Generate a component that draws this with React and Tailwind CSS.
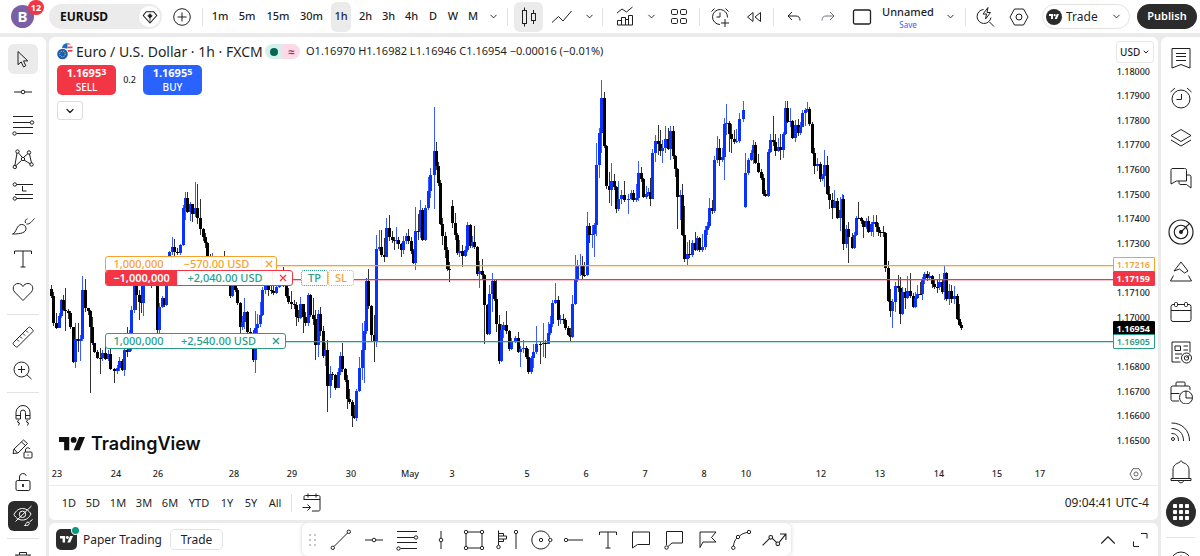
import React from 'react';
import { ChevronDown, ChevronUp } from 'lucide-react';

// Each candle: x, close, high, low. It opens at the previous close; a leading "g" starts a new session at the given open.
const CANDLE_DATA = `
g289 51,296,285,298 53,323,292,326 56,328,313,329 59,316,313,328 61,300,299,318 63,310,295,311 65,311,288,331 68,313,309,319 70,327,311,329
73,362,327,363 75,339,323,368 78,341,323,352 80,339,335,361 82,290,276,341 85,308,279,312 88,311,308,315 90,327,310,393 92,343,317,345
94,352,343,353 97,358,350,359 100,358,348,374 102,353,350,361 105,359,345,360 108,354,350,361 110,369,345,370 114,371,368,383 117,368,365,374
119,361,357,371 122,370,359,371 124,350,348,376 127,352,327,357 129,345,330,352 131,310,306,351 134,285,280,313 136,295,282,310 139,302,290,320
141,303,286,313 143,286,276,316 146,270,264,286 149,276,268,284 151,280,265,288 154,268,262,282 157,330,268,338 159,307,303,338 162,298,296,308
164,305,298,307 166,262,258,306 169,252,251,265 172,247,237,255 174,252,239,256 177,253,248,255 180,245,244,255 183,208,205,246 185,198,192,220
187,212,192,213 190,204,202,221 192,214,204,222 195,208,182,217 197,218,184,224 200,229,199,235 203,237,228,241 205,243,233,248 207,256,242,258
210,265,254,268 212,259,253,268 215,272,258,276 218,268,262,274 221,275,266,279 224,280,251,284 227,276,268,284 230,296,274,298 232,285,283,297
235,290,283,292 237,303,288,305 240,327,302,337 242,322,316,330 244,312,298,329 247,332,311,335 250,344,328,348 253,360,330,362 255,328,311,373
257,324,314,334 260,315,302,327 262,290,287,316 265,285,281,294 268,290,282,296 271,291,284,294 273,293,286,295 276,287,282,294 279,280,274,288
281,276,270,282 283,283,267,287 286,296,278,298 288,302,288,304 291,304,291,309 294,305,300,309 296,317,302,326 298,318,310,322 300,304,297,319
303,317,304,333 305,323,312,326 308,295,293,326 310,315,294,317 313,319,298,325 315,345,310,360 318,314,310,357 320,331,307,336 323,356,326,358
325,350,343,366 327,386,340,412 330,374,366,398 332,375,372,380 335,388,374,390 338,372,368,388 340,356,352,375 342,369,343,372 345,380,368,382
347,399,375,409 349,402,389,404 352,416,400,427 354,418,405,419 356,391,389,421 359,368,357,392 362,350,323,380 364,331,321,383 366,281,278,334
368,306,269,309 371,335,305,341 374,341,315,362 376,249,235,347 379,247,230,251 381,255,230,257 384,257,238,262 386,228,218,257 389,237,215,241
392,240,231,243 394,241,237,250 396,240,227,244 398,244,237,249 401,250,243,257 403,241,236,254 406,236,233,244 408,241,229,244 411,251,237,254
413,263,249,264 415,231,207,270 418,232,214,240 420,210,200,238 422,240,208,241 425,208,205,241 428,191,177,210 430,175,168,198 434,151,107,209
436,166,142,170 438,183,162,186 440,224,180,225 442,236,218,245 445,250,232,258 447,269,247,271 449,270,262,282
g206 452,223,200,228 455,235,213,240 457,253,233,255 459,251,240,257 462,256,245,267 465,250,246,257 467,225,222,252 470,246,224,248 472,242,236,248
474,247,226,249 477,274,246,276 479,271,261,288 482,275,259,280 484,305,274,344 487,334,304,335 489,294,285,335 492,281,273,312 494,299,279,301
496,324,280,332 499,361,315,364 501,330,324,362 503,325,322,338 506,331,311,334 509,349,330,351 511,342,338,350 515,338,336,343 518,352,332,353
520,349,346,367 523,348,340,353 526,357,346,359 528,372,349,374 531,358,356,374 533,352,344,368 536,344,326,354 540,344,341,364 543,343,323,357
545,344,340,358 548,333,322,344 550,324,316,335 552,303,300,327 555,300,283,304 558,320,296,326 560,319,315,324 563,320,314,324 565,328,318,330
568,335,326,336 570,337,328,342 572,304,295,338 575,280,255,305 577,266,260,282 580,265,254,276 582,275,256,279 584,275,262,277 587,226,212,276
589,235,223,243 592,234,225,248 594,225,223,257 596,165,143,236 599,133,128,178 601,98,80,153 604,146,92,148 606,186,145,189 609,190,172,203
611,181,163,206 614,187,174,190 616,209,186,213 618,199,181,211 621,195,190,204 624,200,181,202 628,199,194,214 631,193,190,200 633,200,190,202
636,198,184,202 638,173,161,201 641,179,167,182 643,197,178,198 646,194,186,199 648,192,188,196 650,199,178,206 652,153,149,199 655,141,135,162
658,144,125,155 660,151,130,156 662,148,140,163 665,139,126,153 668,149,128,150 670,131,126,160 673,156,126,159 675,169,155,177 677,197,168,229
680,195,190,220 682,235,184,236 684,259,206,262 687,254,242,265 689,255,240,258 692,243,240,257 695,250,232,251 697,238,236,251 699,250,237,252
702,247,234,252 705,230,226,250 707,226,222,235 709,208,198,228 712,211,200,214 714,160,156,213 717,148,136,163 719,160,139,166 722,157,148,162
724,124,118,180 726,123,104,135 729,134,121,152 731,139,124,153 734,142,130,144 736,141,129,143 739,119,113,143 743,110,101,122
g207 745,173,153,208 748,160,158,175 751,153,150,161 753,145,140,164 755,163,142,164 758,172,154,173 761,178,169,180 763,194,174,196 765,196,190,197
768,152,149,197 770,140,134,153 773,142,116,146 775,151,134,156 778,147,138,152 780,150,134,160 783,134,132,158 785,108,101,135 787,122,101,123
790,121,108,127 792,138,120,139 795,125,120,142 798,133,119,136 800,127,122,135 802,113,110,127 805,110,108,126 807,109,102,112 809,124,107,126
812,153,122,154 814,166,148,174 817,164,158,171 820,179,162,182 822,176,174,181 824,165,150,187 827,194,156,195 829,200,186,209 832,208,193,219
834,201,190,208 837,218,198,219 840,210,197,231 842,199,194,230 843,244,195,250 846,229,225,248 848,237,222,263 852,248,233,249 854,235,232,249
856,218,216,236 858,218,202,219 861,221,217,224 863,227,220,238 866,221,218,229 868,232,216,233 871,224,222,236 873,222,215,237 876,227,215,232
878,232,223,236 880,232,230,237 883,233,226,237 885,268,232,272 888,301,261,302 890,311,289,317 892,302,299,328 895,286,282,312 898,288,275,292
900,314,277,324 902,292,287,315 905,298,288,309 907,291,276,299 910,296,273,298 913,307,293,308 915,298,292,308 917,294,285,299 920,294,282,295
922,279,277,300 924,274,272,284 927,278,271,281 929,276,272,280 932,284,275,288 934,287,280,289 937,287,280,293 939,282,274,290 942,292,279,294
944,273,265,300 946,299,272,301 949,291,284,305 951,299,285,303 954,296,286,304 957,319,294,320 959,325,304,326 961,328,322,330`;

const candles = [];
let previousClose = 0;
CANDLE_DATA.trim().split(/\s+/).forEach((item) => {
  if (item.startsWith('g')) {
    previousClose = Number(item.slice(1));
    return;
  }
  const [x, close, high, low] = item.split(',').map(Number);
  candles.push({ x, open: previousClose, close, high, low, up: close < previousClose });
  previousClose = close;
});

const PLOT = { left: 49, top: 37, width: 1064, height: 426 };

const priceLabels = [
  '1.18000', '1.17900', '1.17800', '1.17700', '1.17600', '1.17500', '1.17400', '1.17300',
  '', '1.17100', '1.17000', '', '1.16800', '1.16700', '1.16600', '1.16500',
];

const timeLabels = [
  ['23', 57], ['24', 116], ['26', 158], ['28', 234], ['29', 292], ['30', 351], ['May', 410], ['3', 452], ['5', 527],
  ['6', 586], ['7', 645], ['8', 704], ['10', 746], ['12', 821], ['13', 880], ['14', 939], ['15', 997], ['17', 1040],
];

const Icon = ({ size = 24, children, className = '' }) => (
  <svg
    width={size}
    height={size}
    viewBox="0 0 24 24"
    fill="none"
    stroke="currentColor"
    strokeWidth="1"
    className={`shrink-0 ${className}`}
    aria-hidden="true"
  >
    {children}
  </svg>
);

const Logo = ({ className }) => (
  <svg viewBox="0 4 35.5 18" fill="currentColor" className={className} aria-hidden="true">
    <path d="M14 22H7V11H0V4h14v18zM28 22h-8l7.5-18h8L28 22z" />
    <circle cx="20" cy="8" r="4" />
  </svg>
);

/* Left toolbar icons */
const CursorIcon = () => (
  <Icon><path d="M7 4.5v13.2l3.2-2.8 2.3 5 2.3-1.1-2.3-4.9h4.3z" /></Icon>
);
const HorizontalLineIcon = () => (
  <Icon><path d="M3 12h7M14 12h7" /><circle cx="12" cy="12" r="1.8" /></Icon>
);
const FibIcon = () => (
  <Icon>
    <path d="M2 3.5h20M2 9.5h17M2 14.5h20M5.500 20.500H22" />
    <circle cx="21" cy="9.5" r="1.7" /><circle cx="3.5" cy="20.5" r="1.7" />
  </Icon>
);
const PatternIcon = () => (
  <Icon>
    <path d="M3.800 19 6 6M7.500 6l3.500 4M13 10l4-3.500M18.500 7l2 9M4.500 19l6-5.500M13 13l6.500 4" />
    <circle cx="6.5" cy="4.5" r="1.7" /><circle cx="3.8" cy="20" r="1.7" /><circle cx="12" cy="12" r="1.7" />
    <circle cx="18" cy="5.5" r="1.7" /><circle cx="20.5" cy="17.5" r="1.7" />
  </Icon>
);
const ForecastIcon = () => (
  <Icon>
    <path d="M5.500 4.500H22M5.500 18.500H22M4 14.500h18M11.500 6v5h4" />
    <circle cx="3.8" cy="4.5" r="1.7" /><circle cx="3.8" cy="18.5" r="1.7" />
  </Icon>
);
const BrushIcon = () => (
  <Icon>
    <path d="M1.500 20c4-1 4-9.500 9-9.500 2.500 0 4.500 1.500 4.500 4 0 4-4.500 5.500-13.500 5.500zM14.500 9c-1-2 .5-4 2-4.200M15.500 10c3.500.5 5.500-3 8-5.500" />
  </Icon>
);
const TextIcon = () => (
  <Icon><path d="M3.500 7V4h17v3M12 4v16M9.500 20h5" /></Icon>
);
const HeartIcon = () => (
  <Icon><path d="M12 20.500 3.600 12C.8 8.800 2.500 3.500 7 3.500c2.200 0 4 1.200 5 3 1-1.800 2.800-3 5-3 4.500 0 6.200 5.300 3.400 8.500z" /></Icon>
);
const RulerIcon = () => (
  <Icon>
    <path d="m2.500 17.500 15-15c.6-.6 1.400-.6 2 0l2.200 2.200c.6.6.6 1.400 0 2l-15 15c-.6.6-1.400.6-2 0l-2.200-2.200c-.6-.6-.6-1.400 0-2zM6 14.500l2 2M9 11.500l2 2M12 8.500l2 2M15 5.500l2 2" />
  </Icon>
);
const ZoomIcon = () => (
  <Icon><circle cx="10.5" cy="11.5" r="7.5" /><path d="m16 17 4.500 4M10.500 8v7M7 11.500h7" /></Icon>
);
const MagnetIcon = () => (
  <Icon>
    <path d="M5 16V9.500a7 7 0 0 1 14 0V16h-4.500V9.500a2.500 2.500 0 0 0-5 0V16zM5 12.500h4.500M14.500 12.500H19M7.500 17l-1 2 2 1-1 2.500M16.500 17l-1 2 2 1-1 2.500" />
  </Icon>
);
const PencilLockIcon = () => (
  <Icon>
    <path d="m2 16.500 1-4.500 9.500-9 4 3.500-9.500 9.500zM3 12l3.500 4M10.500 5l4 3.500" />
    <rect x="13" y="15" width="8" height="6" rx="1" /><path d="M14.500 15v-2a2.300 2.300 0 0 1 4.400-.9M17 17.500v1.200" />
  </Icon>
);
const LockIcon = () => (
  <Icon>
    <rect x="5" y="10.5" width="14" height="10" rx="1.5" />
    <path d="M8.500 10.500V7a3.500 3.500 0 0 1 6.800-1.200" /><path d="M12 14v3" strokeWidth="1.8" />
  </Icon>
);
const HideIcon = () => (
  <Icon>
    <path d="M3 10.500C5 6.500 8 4.500 11.500 4.500S18 6.500 20 10c-2 4-5 6-8.500 6S5 14.500 3 10.500zM20.500 2 4.500 17.500" />
    <circle cx="11.5" cy="10.3" r="3.2" />
    <path d="M13.500 21.500c1.500-.5 1.500-3.500 3.500-3.500 2.500 1 1.500 4-3.500 3.500zM18.500 18l3-2.500" />
  </Icon>
);
const TrashIcon = () => (
  <Icon><path d="M4 6h16M8.500 6V3.500h7V6M6 6l1 14.500h10L18 6" /></Icon>
);

/* Right toolbar icons */
const WatchlistIcon = () => (
  <Icon><path d="M3 2.500h18v19.500l-9-3.500L3 22zM7 7.500h10M7 10.500h10M7 14.500h10" /></Icon>
);
const AlarmIcon = () => (
  <Icon><circle cx="12" cy="13" r="9" /><path d="M12.500 8v5.500h-5M1.500 6 6 2M22.500 6 18 2" /></Icon>
);
const LayersIcon = () => (
  <Icon><path d="m12 3.500 10 6-10 6-10-6zM2 14l10 6 10-6" /></Icon>
);
const ChatIcon = () => (
  <Icon><path d="M4 2.500h11.500c1.500 0 2 .5 2 2V15H7.500L2 18V4.500c0-1.500.5-2 2-2zM17.500 9H20c1.500 0 2 .5 2 2v11l-4.500-3.500H12c-1.500 0-2-.5-2-2V15" /></Icon>
);
const RadarIcon = () => (
  <Icon size={28}>
    <circle cx="12" cy="12" r="10.3" /><circle cx="12" cy="12" r="5.8" />
    <circle cx="12" cy="12" r="1.2" fill="currentColor" /><path d="m12 12 7-7" />
  </Icon>
);
const PyramidIcon = () => (
  <Icon><path d="m5 11 7-9 7 9-3.500 2-5-4zM4.500 15.500 1.500 21h21l-3-5.500" /></Icon>
);
const CalendarIcon = () => (
  <Icon>
    <rect x="2" y="4.5" width="20" height="17" rx="2" /><path d="M2 10.500h20" />
    <rect x="5.5" y="2.5" width="3" height="4" rx="1" fill="white" /><rect x="15.5" y="2.5" width="3" height="4" rx="1" fill="white" />
  </Icon>
);
const NewsIcon = () => (
  <Icon>
    <path d="M11.500 22H3V2h18v10.500M6 6h5.500v4.500H6zM14.500 6H19M14.500 10H19M6 14h7M6 18h4" />
    <circle cx="17.5" cy="18" r="5" /><circle cx="17.5" cy="18" r="2.2" /><path d="m17.500 18 3-3" />
  </Icon>
);
const PortfolioIcon = () => (
  <Icon>
    <path d="M7 6V3c0-.6.4-1 1-1h7c.6 0 1 .4 1 1v3M10 21H4c-1.300 0-2-.7-2-2V8c0-1.300.7-2 2-2h15c1.300 0 2 .7 2 2v2M2 13.500h8.500" />
    <circle cx="17" cy="17.5" r="6.5" /><path d="M17 11v7h6.500" />
  </Icon>
);
const FeedIcon = () => (
  <Icon>
    <circle cx="4" cy="19" r="1.5" />
    <path d="M2.500 13.500c4.500 0 7 2.500 7 7.500M2.500 8.500c7 0 12 4.500 12 12.500M2.500 3C13 3 20.500 10 20.500 21" />
  </Icon>
);
const BellIcon = () => (
  <Icon><path d="M4 18.500V10c0-4 2.500-6.500 6.500-7.500 0-2 3-2 3 0C17.500 3.500 20 6 20 10v8.500M2 18.500h20v2H2zM9.500 20.500c0 3 5 3 5 0" /></Icon>
);
const AppsIcon = () => (
  <svg width="30" height="30" viewBox="0 0 30 30" aria-hidden="true">
    <circle cx="15" cy="15" r="15" fill="#2b2b2b" />
    {[7, 13, 19].map((y) =>
      [7, 13, 19].map((x) => <rect key={`${x}-${y}`} x={x} y={y} width="4" height="4" rx="0.7" fill="white" />)
    )}
  </svg>
);

/* Header icons */
const CandlesIcon = () => (
  <Icon><rect x="5.5" y="5.5" width="4" height="13" /><path d="M7.500 2.500v3M7.500 18.500v3" /><rect x="14.5" y="8.5" width="4" height="7" /><path d="M16.500 5v3M16.500 16v3" /></Icon>
);
const LineChartIcon = () => (
  <Icon><path d="m2 17.500 6.500-6 4.500 4.500 8.500-10" /></Icon>
);
const IndicatorsIcon = () => (
  <Icon>
    <path d="m4 8 5-4 4.500 3L19.500 2" />
    <path d="M4.500 15.500h4V20h-4zM8.500 12.500h4V20h-4zM12.500 14.500h3V20h-3zM15.500 10.500h4V20h-4z" />
  </Icon>
);
const GridIcon = () => (
  <Icon>
    <rect x="4.5" y="4.5" width="6" height="5" rx="1.2" /><rect x="13.500" y="4.5" width="6" height="5" rx="1.2" />
    <rect x="4.5" y="13.5" width="6" height="5" rx="1.2" /><rect x="13.500" y="13.5" width="6" height="5" rx="1.2" />
  </Icon>
);
const AddAlertIcon = () => (
  <Icon><path d="M12 19.500a7.500 7.500 0 1 1 7.500-7M12 7.500V12H8.500M3.500 6.500l3-3M20.500 6.500l-3-3M17 14v8M13 18h8" /></Icon>
);
const ReplayIcon = () => (
  <Icon><path d="M11 7.500v9l-5.500-4.500zM18.500 7.500v9L13 12z" /></Icon>
);
const UndoIcon = () => (
  <Icon><path d="m10 7-4 4 4 4M6 11h8c2.500 0 4 1.500 4 4.500" /></Icon>
);
const RedoIcon = () => (
  <Icon className="text-gray-500"><path d="m14 7 4 4-4 4M18 11h-8c-2.500 0-4 1.500-4 4.500" /></Icon>
);
const SquareIcon = () => (
  <Icon><rect x="3.5" y="5" width="17" height="14" rx="1.5" strokeWidth="1.3" /></Icon>
);
const QuickSearchIcon = () => (
  <Icon><path d="M10.500 4.500a7 7 0 1 0 7.500 8M16.500 17l4.500 4.500M15 2.500l-5 6.500h3.500l-1 5L17.500 7.500H14z" /></Icon>
);
const HexagonIcon = ({ size = 24 }) => (
  <Icon size={size}><path d="M7.500 4h9l4.500 8-4.500 8h-9L3 12z" /><circle cx="12" cy="12" r="3" /></Icon>
);

/* Favourite drawing tools */
const TrendLineIcon = () => (
  <Icon><path d="M5 18.500 18.500 5" /><circle cx="3.8" cy="19.8" r="1.7" /><circle cx="19.8" cy="3.8" r="1.7" /></Icon>
);
const VerticalLineIcon = () => (
  <Icon><path d="M12 3v7M12 14v7" /><circle cx="12" cy="12" r="1.8" /></Icon>
);
const RectangleIcon = () => (
  <Icon>
    <path d="M6 4h12M20 6v12M18 20H6M4 18V6" />
    <circle cx="4" cy="4" r="1.7" /><circle cx="20" cy="4" r="1.7" /><circle cx="4" cy="20" r="1.7" /><circle cx="20" cy="20" r="1.7" />
  </Icon>
);
const VolumeProfileIcon = () => (
  <Icon>
    <path d="M3.500 2.500V17M3.500 5.500h5V8h3v3h-3v2.500h-5M3.500 8h5M3.500 11h5M21 6v15" />
    <circle cx="3.5" cy="19" r="1.7" /><circle cx="21" cy="4" r="1.7" />
  </Icon>
);
const CircleIcon = () => (
  <Icon><path d="M20.500 9.500a9 9 0 1 0 0 5" /><circle cx="12" cy="12" r="1.7" /><circle cx="21.3" cy="12" r="1.7" /></Icon>
);
const RayIcon = () => (
  <Icon><path d="M6 12h15" /><circle cx="4" cy="12" r="1.7" /></Icon>
);
const NoteIcon = () => (
  <Icon><path d="M3.500 4h17v12.500H8.500L3.500 20z" /></Icon>
);
const CalloutIcon = () => (
  <Icon><path d="M4.500 17V3.500h16V15H10l-4 3.500" /><circle cx="4.5" cy="19.5" r="1.7" /></Icon>
);
const FlagIcon = () => (
  <Icon><path d="M4 19.500V4h16l-4.500 5.500L20 14H7z" /></Icon>
);
const CurveIcon = () => (
  <Icon>
    <path d="M4.500 18c.5-4 1.500-6.500 3.500-8M10.500 8c2-2 5-3 7.500-3.500" />
    <circle cx="4.3" cy="19.8" r="1.7" /><circle cx="9" cy="9" r="1.7" /><circle cx="20" cy="4" r="1.7" />
  </Icon>
);
const PathIcon = () => (
  <Icon size={26}>
    <path d="m1.500 17 6-6M10.500 10.500l4 4M17 14l5.500-7M17.500 6.500H23v5.500" />
    <circle cx="9" cy="9.5" r="1.7" /><circle cx="15.5" cy="15.5" r="1.7" />
  </Icon>
);
const GoToDateIcon = () => (
  <Icon><path d="M4 9V6c0-1 .5-1.500 1.500-1.500h13c1 0 1.500.5 1.500 1.500v12.500c0 1-.5 1.500-1.500 1.500H12M4 8.500h16M8 2.500v4M16 2.500v4M2.500 16.500h8M7.500 13.500l3 3-3 3" /></Icon>
);
const ExpandIcon = () => (
  <Icon><path d="M13 5.500h6v5M11 18.500H5.500v-5" /></Icon>
);

const Divider = ({ className = '' }) => <span className={`h-[18px] w-px shrink-0 bg-[#e3e3e3] ${className}`} />;

const DropdownButton = ({ label, className }) => (
  <button aria-label={label} className={`flex h-[30px] shrink-0 items-center justify-center ${className}`}>
    <ChevronDown size={11} strokeWidth={2} />
  </button>
);

const ToolButton = ({ label, className = '', children }) => (
  <button aria-label={label} title={label} className={`flex shrink-0 items-center justify-center ${className}`}>
    {children}
  </button>
);

const Header = () => {
  const intervals = [
    ['1m', 'w-[26px]'], ['5m', 'w-[28px]'], ['15m', 'w-[34px]'], ['30m', 'w-[33px]'],
    ['1h', 'mx-[3px] w-[20px] rounded-md bg-[#ebebeb]'],
    ['2h', 'w-[23px]'], ['3h', 'w-[23px]'], ['4h', 'w-[23px]'],
    ['D', 'w-[20px]'], ['W', 'w-[20px]'], ['M', 'w-[20px]'],
  ];

  return (
    <header className="flex h-[33px] shrink-0 items-center bg-white pr-1">
      <button aria-label="Open user menu" className="relative ml-[11px] flex h-[23px] w-[23px] shrink-0 items-center justify-center rounded-full bg-[#7a5fa5] text-[15px] font-bold text-white">
        B
        <span className="absolute -top-[5px] left-[17px] flex h-[15px] w-[16px] items-center justify-center rounded-full bg-[#f23645] text-[9px] font-bold text-white">12</span>
      </button>

      <div className="ml-[15px] flex h-[25px] w-[113px] shrink-0 items-center justify-between rounded-full bg-[#ebebeb] pr-[2px] pl-[11px]">
        <button className="text-[12px] font-bold text-[#0f0f0f]">EURUSD</button>
        <button aria-label="Broker data" className="flex h-[21px] w-[21px] items-center justify-center rounded-full bg-white">
          <Icon size={18}><path d="M7 5h10l4 5-9 10-9-10z" strokeWidth="1.4" /><path d="m12 7.500 3 3-3 3-3-3zM12 13v6" fill="currentColor" /></Icon>
        </button>
      </div>

      <ToolButton label="Compare symbols" className="ml-[9px] w-[22px]">
        <Icon><circle cx="12" cy="12" r="8.3" /><path d="M12 7.500v9M7.500 12h9" /></Icon>
      </ToolButton>
      <Divider className="mr-[4px] ml-[9px]" />

      {intervals.map(([label, className]) => (
        <button key={label} className={`h-[30px] shrink-0 text-[11px] font-medium ${className}`}>{label}</button>
      ))}
      <DropdownButton label="Chart interval" className="w-[20px]" />
      <Divider className="mr-[6px] ml-1" />

      <ToolButton label="Candles" className="h-[30px] w-[29px] rounded-md bg-[#ebebeb]"><CandlesIcon /></ToolButton>
      <ToolButton label="Line" className="w-[37px]"><LineChartIcon /></ToolButton>
      <DropdownButton label="Chart type" className="w-[18px]" />
      <Divider className="mx-1" />

      <ToolButton label="Indicators" className="w-[36px]"><IndicatorsIcon /></ToolButton>
      <DropdownButton label="Favorite indicators" className="w-[16px]" />
      <ToolButton label="Indicator templates" className="w-[40px]"><GridIcon /></ToolButton>
      <Divider />
      <ToolButton label="Create alert" className="w-[40px]"><AddAlertIcon /></ToolButton>
      <ToolButton label="Bar replay" className="w-[28px]"><ReplayIcon /></ToolButton>
      <Divider className="mx-[5px]" />
      <ToolButton label="Undo" className="w-[30px]"><UndoIcon /></ToolButton>
      <ToolButton label="Redo" className="w-[37px]"><RedoIcon /></ToolButton>

      <div className="ml-auto flex items-center">
        <ToolButton label="Layout setup" className="w-[32px]"><SquareIcon /></ToolButton>
        <button className="flex w-[60px] shrink-0 flex-col items-center">
          <span className="text-[11px] leading-[15px] font-medium">Unnamed</span>
          <span className="text-[8px] leading-[11px] text-[#2962ff]">Save</span>
        </button>
        <DropdownButton label="Manage layouts" className="w-[24px]" />
        <Divider className="mx-[3px]" />
        <ToolButton label="Quick search" className="w-[32px]"><QuickSearchIcon /></ToolButton>
        <ToolButton label="Settings" className="w-[36px]"><HexagonIcon /></ToolButton>
        <div className="ml-[5px] flex h-[25px] w-[88px] shrink-0 items-center rounded-full border border-[#e3e3e3]">
          <button className="flex flex-1 items-center gap-1 pl-[3px] text-[12px]">
            <span className="flex h-[16px] w-[16px] items-center justify-center rounded-full bg-[#2b2b2b] text-white">
              <Logo className="w-[10px]" />
            </span>
            Trade
          </button>
          <DropdownButton label="Trade options" className="w-[25px]" />
        </div>
        <button className="ml-[7px] h-[25px] w-[60px] shrink-0 rounded-full bg-[#2b2b2b] text-[11px] font-semibold text-white">Publish</button>
      </div>
    </header>
  );
};

const LeftTool = ({ label, active, children }) => (
  <button aria-label={label} title={label} className="flex flex-1 items-center justify-center">
    <span className={`flex h-[30px] w-[30px] items-center justify-center rounded-md ${active || ''}`}>{children}</span>
  </button>
);

const DrawingToolbar = () => (
  <nav aria-label="Drawing tools" className="w-[46px] shrink-0 overflow-hidden rounded-tr-md bg-white pt-[5px]">
    <div className="flex h-[267px] flex-col">
      <LeftTool label="Cursor" active="bg-[#ebebeb]"><CursorIcon /></LeftTool>
      <LeftTool label="Horizontal line"><HorizontalLineIcon /></LeftTool>
      <LeftTool label="Fib retracement"><FibIcon /></LeftTool>
      <LeftTool label="XABCD pattern"><PatternIcon /></LeftTool>
      <LeftTool label="Long position"><ForecastIcon /></LeftTool>
      <LeftTool label="Brush"><BrushIcon /></LeftTool>
      <LeftTool label="Text"><TextIcon /></LeftTool>
      <LeftTool label="Icons"><HeartIcon /></LeftTool>
    </div>
    <hr className="mx-[7px] my-[5px] border-[#e3e3e3]" />
    <div className="flex h-[67px] flex-col">
      <LeftTool label="Measure"><RulerIcon /></LeftTool>
      <LeftTool label="Zoom in"><ZoomIcon /></LeftTool>
    </div>
    <hr className="mx-[7px] my-[5px] border-[#e3e3e3]" />
    <div className="flex h-[135px] flex-col">
      <LeftTool label="Magnet mode"><MagnetIcon /></LeftTool>
      <LeftTool label="Keep drawing"><PencilLockIcon /></LeftTool>
      <LeftTool label="Lock all drawings"><LockIcon /></LeftTool>
      <LeftTool label="Hide all drawings" active="bg-[#2b2b2b] text-white"><HideIcon /></LeftTool>
    </div>
    <hr className="mx-[7px] my-[5px] border-[#e3e3e3]" />
    <div className="flex h-[34px] flex-col">
      <LeftTool label="Remove objects"><TrashIcon /></LeftTool>
    </div>
  </nav>
);

const WidgetBar = () => (
  <nav aria-label="Widgets" className="flex w-[39px] shrink-0 flex-col overflow-hidden rounded-tl-md bg-white pt-px">
    <ToolButton label="Watchlist" className="h-10"><WatchlistIcon /></ToolButton>
    <ToolButton label="Alerts" className="h-10"><AlarmIcon /></ToolButton>
    <ToolButton label="Object tree" className="h-10"><LayersIcon /></ToolButton>
    <ToolButton label="Chats" className="h-10"><ChatIcon /></ToolButton>
    <ToolButton label="Screeners" className="mt-[14px] h-10"><RadarIcon /></ToolButton>
    <ToolButton label="Pine" className="h-10"><PyramidIcon /></ToolButton>
    <ToolButton label="Calendars" className="h-10"><CalendarIcon /></ToolButton>
    <ToolButton label="News" className="h-10"><NewsIcon /></ToolButton>
    <ToolButton label="Portfolios" className="h-10"><PortfolioIcon /></ToolButton>
    <ToolButton label="Ideas stream" className="h-10"><FeedIcon /></ToolButton>
    <ToolButton label="Notifications" className="h-10"><BellIcon /></ToolButton>
    <ToolButton label="Products" className="h-10"><AppsIcon /></ToolButton>
    <hr className="mx-[5px] mt-[5px] mb-3 border-[#e3e3e3]" />
    <ToolButton label="Help center"><Icon><circle cx="12" cy="12" r="10" /><path d="M9 9a3 3 0 0 1 6 0c0 2-3 2-3 4.500" /></Icon></ToolButton>
  </nav>
);

const CandleChart = () => (
  <svg
    viewBox={`${PLOT.left} ${PLOT.top} ${PLOT.width} ${PLOT.height}`}
    preserveAspectRatio="none"
    shapeRendering="crispEdges"
    className="absolute inset-0 h-full w-full"
    role="img"
    aria-label="EURUSD hourly candles"
  >
    {candles.map((candle) => (
      <g key={candle.x}>
        <rect x={candle.x} y={candle.high} width="1" height={candle.low - candle.high} fill={candle.up ? '#3a5cff' : '#333333'} />
        <rect
          x={candle.x - 1}
          y={Math.min(candle.open, candle.close)}
          width="3"
          height={Math.max(1, Math.abs(candle.open - candle.close))}
          fill={candle.up ? '#0a32ff' : '#000000'}
        />
      </g>
    ))}
  </svg>
);

const PriceLine = ({ className }) => <span className={`absolute right-0 h-[2px] border-t ${className}`} />;

const OrderLabel = ({ quantity, profit, className, quantityClass, profitClass, closeClass }) => (
  <div className={`absolute left-[56px] flex items-stretch overflow-hidden rounded-[3px] border bg-white text-[11px] leading-[14px] font-medium ${className}`}>
    <span className={`text-center ${quantityClass}`}>{quantity}</span>
    <span className={`border-l border-current/10 text-center ${profitClass}`}>{profit}</span>
    <button aria-label="Close" className={`flex items-center justify-center border-l border-current/10 ${closeClass}`}>
      <svg width="8" height="8" viewBox="0 0 8 8" stroke="currentColor" strokeWidth="1.3" aria-hidden="true">
        <path d="m1 1 6 6M7 1 1 7" />
      </svg>
    </button>
  </div>
);

const Legend = () => (
  <div className="relative pt-[6px] pl-2">
    <div className="flex h-[17px] items-center whitespace-nowrap">
      <svg width="16" height="17" viewBox="0 0 16 17" aria-hidden="true">
        <circle cx="10.5" cy="5.5" r="5.5" fill="#fff" />
        <path d="M10.500 0a5.500 5.500 0 0 0-5.500 5.500h5.500z" fill="#1a6fc4" />
        <path d="M10.500 0v1.500H14A5.500 5.500 0 0 0 10.500 0zM10.500 3.500h5v1.800h-5zM10.500 7h5.300l-.8 1.800h-4.500z" fill="#ef4452" />
        <circle cx="5.5" cy="11" r="6" fill="#fff" /><circle cx="5.5" cy="11" r="5.3" fill="#1a5fb4" />
        <circle cx="5.5" cy="11" r="2.8" fill="none" stroke="#ffd54a" strokeWidth="1" strokeDasharray="1 1.2" />
      </svg>
      <h1 className="ml-[3px] w-[189px] text-[14px]">Euro / U.S. Dollar · 1h · FXCM</h1>
      <span className="flex h-[15px] w-[35px] items-center rounded-full bg-linear-to-r from-[#d5f0ea] from-50% to-[#fcd9e6] to-50%">
        <span className="flex flex-1 items-center justify-center"><span className="h-2 w-2 rounded-full bg-[#056656]" /></span>
        <span className="flex-1 text-center text-[11px] leading-[15px] font-bold text-[#b01e5b]">≈</span>
      </span>
      <p className="ml-[6px] text-[11px]">O1.16970 H1.16982 L1.16946 C1.16954 −0.00016 (−0.01%)</p>
    </div>
    <div className="mt-[5px] flex items-center text-center text-[10px] leading-[14px] font-medium">
      <button className="h-[30px] w-[59px] rounded-[5px] bg-[#f23645] text-white">
        <span className="flex justify-center text-[11px] font-bold">1.1695<span className="text-[9px] leading-[11px]">3</span></span>
        <span className="block">SELL</span>
      </button>
      <span className="w-[27px] text-[9px]">0.2</span>
      <button className="h-[30px] w-[59px] rounded-[5px] bg-[#2962ff] text-white">
        <span className="flex justify-center text-[11px] font-bold">1.1695<span className="text-[9px] leading-[11px]">5</span></span>
        <span className="block">BUY</span>
      </button>
    </div>
    <button aria-label="Hide indicator legend" className="mt-[6px] flex h-[19px] w-[26px] items-center justify-center rounded-[3px] border border-[#dcdcdc] bg-white">
      <ChevronDown size={12} strokeWidth={2.5} />
    </button>
  </div>
);

const PriceTag = ({ children, className }) => (
  <span className={`absolute right-[3px] flex h-[15px] w-[42px] items-center justify-end rounded-[1px] border pr-1 ${className}`}>{children}</span>
);

const PriceAxis = () => (
  <div className="relative w-[45px] shrink-0 text-[9px] font-medium">
    <ul className="flex h-full flex-col pt-[22px] pb-[10px]">
      {priceLabels.map((price, index) => (
        <li key={index} className="flex flex-1 items-center justify-end pr-2">{price}</li>
      ))}
    </ul>
    <label className="absolute top-1 right-1 flex h-[22px] w-[38px] items-center rounded-[3px] border border-[#e8e8e8] bg-white">
      <select aria-label="Currency" className="h-full w-full appearance-none pl-[3px] text-[10px] outline-none"><option>USD</option></select>
      <ChevronDown size={8} strokeWidth={3} className="pointer-events-none absolute right-[3px]" />
    </label>
    <PriceTag className="top-[220px] border-[#f7a12f] bg-white font-semibold text-[#f7a12f]">1.17216</PriceTag>
    <PriceTag className="top-[234px] border-[#f23645] bg-[#f23645] font-bold text-white">1.17159</PriceTag>
    <PriceTag className="top-[284px] border-black bg-black font-bold text-white">1.16954</PriceTag>
    <PriceTag className="top-[297px] border-[#2a9d87] bg-white font-semibold text-[#2a9d87]">1.16905</PriceTag>
  </div>
);

const TimeAxis = () => (
  <div className="flex h-[23px] shrink-0 border-b border-[#ececec] text-[9px] font-medium">
    <div className="relative flex-1">
      {timeLabels.map(([label, x]) => (
        <span
          key={label}
          className="absolute top-[5px] -translate-x-1/2 leading-[12px]"
          style={{ left: `${((x - PLOT.left) / PLOT.width) * 100}%` }}
        >
          {label}
        </span>
      ))}
    </div>
    <button aria-label="Axis settings" className="flex w-[45px] items-center justify-center"><HexagonIcon size={16} /></button>
  </div>
);

const RangeBar = () => {
  const ranges = [
    ['1D', 'w-[24px]'], ['5D', 'w-[24px]'], ['1M', 'w-[26px]'], ['3M', 'w-[26px]'], ['6M', 'w-[26px]'],
    ['YTD', 'w-[32px]'], ['1Y', 'w-[24px]'], ['5Y', 'w-[24px]'], ['All', 'w-[24px]'],
  ];

  return (
    <div className="flex h-[34px] shrink-0 items-center pr-[9px] pl-2 text-[11px]">
      {ranges.map(([label, className]) => (
        <button key={label} className={`shrink-0 text-center ${className}`}>{label}</button>
      ))}
      <Divider className="mr-[8px] ml-[4px]" />
      <ToolButton label="Go to date"><GoToDateIcon /></ToolButton>
      <button className="ml-auto text-[12px]">09:04:41 UTC-4</button>
    </div>
  );
};

const BottomPanel = () => (
  <section className="flex h-[33px] shrink-0 items-center overflow-hidden rounded-t-md bg-white">
    <div className="flex w-[253px] shrink-0 items-center pl-[7px] text-[12px]">
      <span className="relative flex h-[21px] w-[21px] shrink-0 items-center justify-center rounded-[5px] bg-[#2b2b2b] text-white">
        <Logo className="w-[13px]" />
        <span className="absolute -top-[2px] -right-[2px] h-[7px] w-[7px] rounded-full bg-[#089981] ring-1 ring-white" />
      </span>
      <button className="ml-[5px] w-[81px] shrink-0 whitespace-nowrap">Paper Trading</button>
      <button className="ml-[7px] h-[21px] w-[53px] rounded-[5px] border border-[#e3e3e3]">Trade</button>
    </div>
    <div className="flex h-full w-[489px] shrink-0 items-center rounded-md shadow-[0_0_4px_rgba(0,0,0,0.18)]">
      <svg width="22" height="24" viewBox="0 0 22 24" fill="#b5b5b5" aria-hidden="true">
        {[7, 12, 17].map((y) => [8, 13].map((x) => <circle key={`${x}-${y}`} cx={x} cy={y} r="1" />))}
      </svg>
      <ToolButton label="Trend line" className="flex-1"><TrendLineIcon /></ToolButton>
      <ToolButton label="Horizontal line" className="flex-1"><HorizontalLineIcon /></ToolButton>
      <ToolButton label="Fib retracement" className="flex-1"><FibIcon /></ToolButton>
      <ToolButton label="Vertical line" className="flex-1"><VerticalLineIcon /></ToolButton>
      <ToolButton label="Rectangle" className="flex-1"><RectangleIcon /></ToolButton>
      <ToolButton label="Volume profile" className="flex-1"><VolumeProfileIcon /></ToolButton>
      <ToolButton label="Circle" className="flex-1"><CircleIcon /></ToolButton>
      <ToolButton label="Horizontal ray" className="flex-1"><RayIcon /></ToolButton>
      <ToolButton label="Text" className="flex-1"><TextIcon /></ToolButton>
      <ToolButton label="Note" className="flex-1"><NoteIcon /></ToolButton>
      <ToolButton label="Callout" className="flex-1"><CalloutIcon /></ToolButton>
      <ToolButton label="Flag" className="flex-1"><FlagIcon /></ToolButton>
      <ToolButton label="Curve" className="flex-1"><CurveIcon /></ToolButton>
      <ToolButton label="Path" className="flex-1"><PathIcon /></ToolButton>
    </div>
    <div className="ml-auto flex shrink-0 items-center gap-1 pr-[4px]">
      <ToolButton label="Open panel" className="w-[28px]"><ChevronUp size={26} strokeWidth={1} /></ToolButton>
      <ToolButton label="Maximize panel" className="w-[28px]"><ExpandIcon /></ToolButton>
    </div>
  </section>
);

const App = () => {
  return (
    <div className="flex h-screen flex-col gap-1 overflow-hidden bg-[#ebebeb] font-['Noto_Sans',sans-serif] text-[#1f1f1f]">
      <Header />

      <div className="flex min-h-0 flex-1 gap-[3px]">
        <DrawingToolbar />

        <div className="flex min-w-0 flex-1 flex-col gap-[3px]">
          <main className="flex min-h-0 flex-1 flex-col overflow-hidden rounded-md bg-white">
            <div className="flex min-h-0 flex-1">
              <div className="relative min-w-0 flex-1">
                <CandleChart />
                <Legend />

                {/* Working orders and the open position */}
                <PriceLine className="top-[228px] left-[227px] border-[#f7a12f] bg-[#f7a12f]/30" />
                <PriceLine className="top-[242px] left-[243px] border-[#f23645] bg-[#f23645]/30" />
                <PriceLine className="top-[304px] left-[236px] border-[#2a9d87] bg-[#2a9d87]/30" />
                <OrderLabel
                  quantity="1,000,000"
                  profit="−570.00 USD"
                  className="top-[219px] border-[#f7a12f] text-[#f7a12f]"
                  quantityClass="w-[65px]"
                  profitClass="w-[90px]"
                  closeClass="w-[15px]"
                />
                <OrderLabel
                  quantity="−1,000,000"
                  profit="+2,040.00 USD"
                  className="top-[233px] border-[#f23645] text-[#f23645]"
                  quantityClass="w-[71px] bg-[#f23645] font-semibold text-white"
                  profitClass="w-[95px] text-[#2a9d87]"
                  closeClass="w-[20px]"
                />
                <OrderLabel
                  quantity="1,000,000"
                  profit="+2,540.00 USD"
                  className="top-[296px] border-[#2a9d87] text-[#2a9d87]"
                  quantityClass="w-[65px]"
                  profitClass="w-[94px]"
                  closeClass="w-[20px]"
                />
                <div className="absolute top-[233px] left-[252px] flex bg-white text-[11px] leading-[14px] font-medium">
                  <button className="w-[27px] rounded-[3px] border border-dotted border-[#2a9d87] text-[#2a9d87]">TP</button>
                  <button className="w-[26px] rounded-[3px] border border-dotted border-[#f7a12f] text-[#f7a12f]">SL</button>
                </div>

                <a href="#tradingview" className="absolute bottom-[8px] left-[10px] flex items-center gap-[6px] text-[#0f0f0f]">
                  <Logo className="w-[26px]" />
                  <span className="font-['Inter',sans-serif] text-[18px] leading-[22px] font-semibold">TradingView</span>
                </a>
              </div>
              <PriceAxis />
            </div>
            <TimeAxis />
            <RangeBar />
          </main>

          <BottomPanel />
        </div>

        <WidgetBar />
      </div>
    </div>
  );
};

export default App;
